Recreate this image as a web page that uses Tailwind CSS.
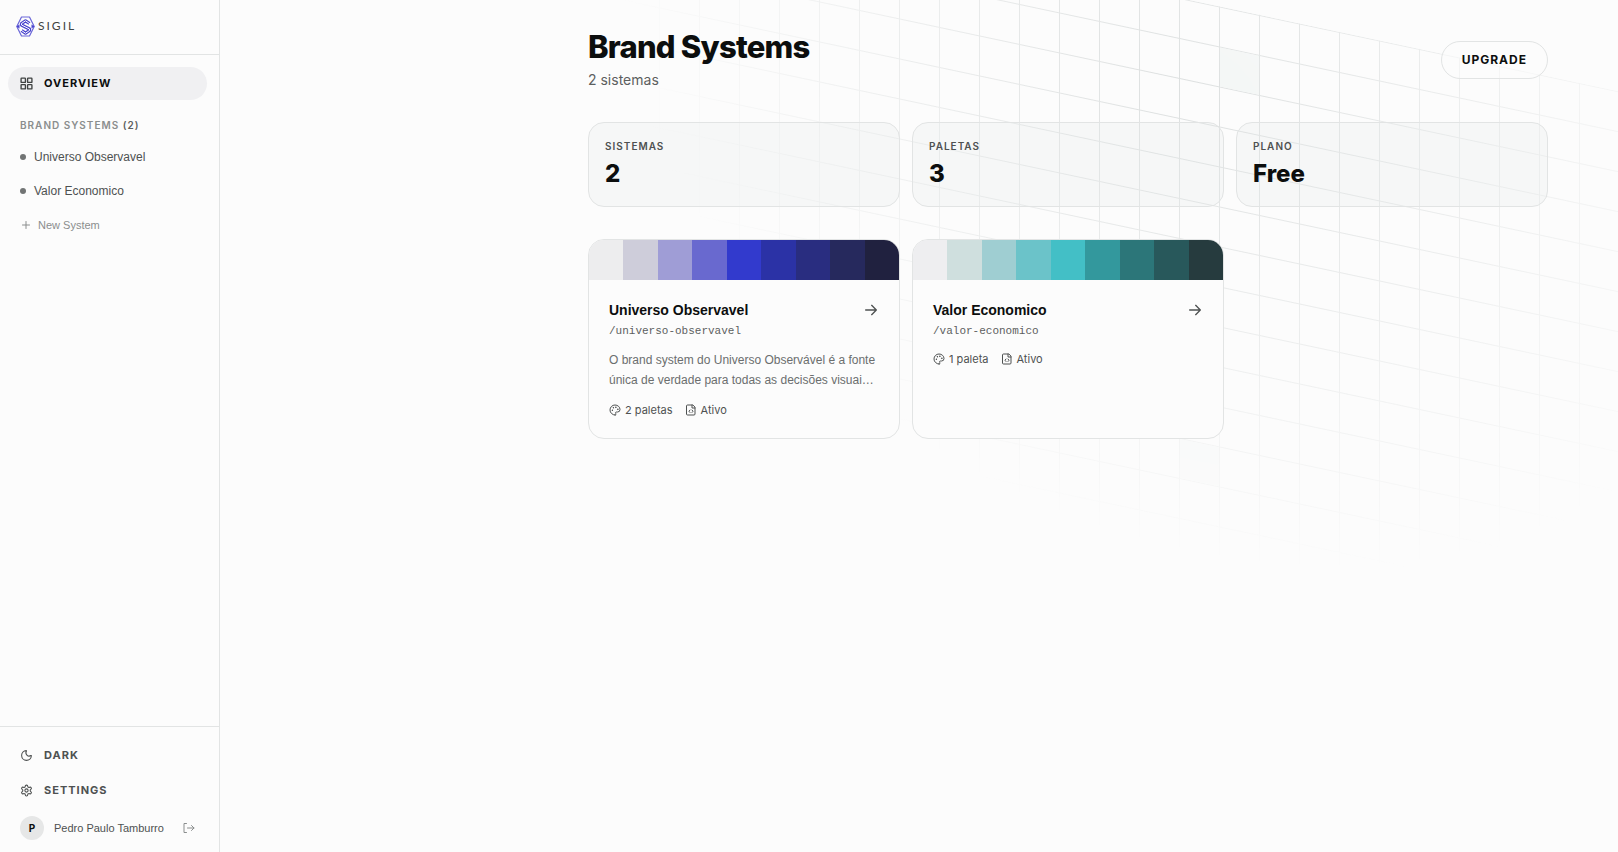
<!DOCTYPE html>
<html lang="pt-BR">
<head>
    <meta charset="UTF-8">
    <meta name="viewport" content="width=device-width, initial-scale=1.0">
    <title>Sigil - Brand Systems</title>
    <script src="https://cdn.jsdelivr.net/npm/@tailwindcss/browser@4"></script>
</head>
<body class="flex min-h-screen bg-[#fcfcfc] text-[#0c0e0e] font-['Inter',sans-serif] antialiased">
    <!-- Sidebar -->
    <aside class="w-[220px] shrink-0 flex flex-col border-r border-[#e2e4e4]">
        <div class="h-[55px] px-4 pb-[2px] flex items-center border-b border-[#e2e4e4]">
            <a href="#" class="flex items-center gap-[3px] text-[#3f4242]" aria-label="Sigil">
                <svg class="w-[19px] h-[21px]" viewBox="0 0 19 21" fill="none" stroke-linejoin="round">
                    <path d="M5.500 1h8L18.200 10.500 13.500 20h-8L.8 10.500z" stroke="#6a66d8" stroke-width="1.200"/>
                    <path d="M13.500 7.500 9.500 4.800 5.500 7.500v1.500l8 4v1.500l-4 2.700-4-2.700" stroke="#4b45cf" stroke-width="3.200"/>
                    <path d="M14.500 8.200 9.500 4.800 5.500 7.500v1.500l8 4v1.500l-4 2.700-5-3.400" stroke="#fcfcfc" stroke-width="1"/>
                    <path d="M.5 10.500 3.500 8.500v4zM18.500 10.500l-3-2v4z" fill="#4b45cf"/>
                </svg>
                <span class="text-xs tracking-[2px] font-['Lato',sans-serif]">SIGIL</span>
            </a>
        </div>

        <nav class="flex-1 pl-2 pr-3 pt-3">
            <a href="#" class="h-[33px] px-3 flex items-center gap-[11px] rounded-full bg-[#f0f0f2] text-[11px] font-bold tracking-[1px]">
                <svg class="size-[13px] text-[#3f4242]" viewBox="0 0 24 24" fill="none" stroke="currentColor" stroke-width="2.500"><rect x="2" y="2" width="8" height="8" rx="1"/><rect x="14" y="2" width="8" height="8" rx="1"/><rect x="14" y="14" width="8" height="8" rx="1"/><rect x="2" y="14" width="8" height="8" rx="1"/></svg>
                OVERVIEW
            </a>
            <p class="mt-[17px] px-3 text-[10px] leading-4 font-semibold tracking-[1px] text-[#8b8e8e]">BRAND SYSTEMS <span class="text-[#5c5f5f]">(2)</span></p>
            <ul class="mt-[7px] text-xs text-[#4e5151] font-['Liberation_Sans',sans-serif]">
                <li><a href="#" class="h-[34px] px-3 flex items-center gap-2"><span class="size-[6px] rounded-full bg-[#717474]"></span>Universo Observavel</a></li>
                <li><a href="#" class="h-[34px] px-3 flex items-center gap-2"><span class="size-[6px] rounded-full bg-[#717474]"></span>Valor Economico</a></li>
            </ul>
            <button type="button" class="h-[34px] px-3 flex items-center gap-[6px] text-[11px] text-[#8b8e8e] font-['Liberation_Sans',sans-serif]">
                <svg class="size-3" viewBox="0 0 24 24" fill="none" stroke="currentColor" stroke-width="2" stroke-linecap="round"><path d="M5 12h14M12 5v14"/></svg>
                New System
            </button>
        </nav>

        <div class="pl-2 pr-3 pt-3 pb-1 border-t border-[#e2e4e4] text-[#4e5151]">
            <button type="button" class="w-full h-[33px] px-3 flex items-center gap-[11px] text-[11px] font-bold tracking-[1px]">
                <svg class="size-[13px]" viewBox="0 0 24 24" fill="none" stroke="currentColor" stroke-width="2" stroke-linecap="round" stroke-linejoin="round"><path d="M20.985 12.486a9 9 0 1 1-9.473-9.472c.405-.022.617.46.402.803a6 6 0 0 0 8.268 8.268c.344-.215.825-.004.803.401"/></svg>
                DARK
            </button>
            <a href="#" class="mt-[2px] h-[33px] px-3 flex items-center gap-[11px] text-[11px] font-bold tracking-[1px]">
                <svg class="size-[13px]" viewBox="0 0 24 24" fill="none" stroke="currentColor" stroke-width="2" stroke-linecap="round" stroke-linejoin="round"><path d="M12.220 2h-.44a2 2 0 0 0-2 2v.18a2 2 0 0 1-1 1.730l-.43.25a2 2 0 0 1-2 0l-.15-.08a2 2 0 0 0-2.730.730l-.22.38a2 2 0 0 0 .73 2.730l.15.1a2 2 0 0 1 1 1.720v.51a2 2 0 0 1-1 1.740l-.15.09a2 2 0 0 0-.73 2.730l.22.38a2 2 0 0 0 2.730.730l.15-.08a2 2 0 0 1 2 0l.43.25a2 2 0 0 1 1 1.730V20a2 2 0 0 0 2 2h.44a2 2 0 0 0 2-2v-.18a2 2 0 0 1 1-1.730l.43-.25a2 2 0 0 1 2 0l.15.08a2 2 0 0 0 2.730-.730l.22-.39a2 2 0 0 0-.73-2.730l-.15-.08a2 2 0 0 1-1-1.740v-.5a2 2 0 0 1 1-1.740l.15-.09a2 2 0 0 0 .73-2.730l-.22-.38a2 2 0 0 0-2.730-.730l-.15.08a2 2 0 0 1-2 0l-.43-.25a2 2 0 0 1-1-1.730V4a2 2 0 0 0-2-2z"/><circle cx="12" cy="12" r="3"/></svg>
                SETTINGS
            </a>
            <div class="mt-px h-10 px-3 flex items-center text-[11px]">
                <span class="size-6 rounded-full bg-[#e6e7e7] flex items-center justify-center text-[10px] font-bold text-[#0c0e0e]">P</span>
                <span class="ml-[10px] flex-1 whitespace-nowrap font-['Liberation_Sans',sans-serif]">Pedro Paulo Tamburro</span>
                <button type="button" aria-label="Sair" class="text-[#8b8e8e]">
                    <svg class="size-3" viewBox="0 0 24 24" fill="none" stroke="currentColor" stroke-width="2" stroke-linecap="round" stroke-linejoin="round"><path d="M7 3H2v18h5M9 12h13M17 7l5 5-5 5"/></svg>
                </button>
            </div>
        </div>
    </aside>

    <!-- Main -->
    <main class="relative flex-1 overflow-hidden">
        <!-- Decorative skewed grid -->
        <svg class="absolute inset-0 w-full h-full pointer-events-none" aria-hidden="true">
            <defs>
                <pattern id="grid" width="40" height="40" patternUnits="userSpaceOnUse" x="999" y="-166">
                    <path d="M.5 40V.5H40" fill="none" stroke="#dcdfdf"/>
                </pattern>
                <radialGradient id="fade" gradientUnits="userSpaceOnUse" cx="0" cy="0" r="1" gradientTransform="translate(970 -110) scale(570 460)">
                    <stop offset="0" stop-color="#fff"/>
                    <stop offset="1" stop-color="#fff" stop-opacity="0"/>
                </radialGradient>
                <mask id="grid-mask" maskUnits="userSpaceOnUse" x="0" y="-400" width="1600" height="1400">
                    <rect x="0" y="-400" width="1600" height="1400" fill="url(#fade)"/>
                </mask>
            </defs>
            <g transform="skewY(12)">
                <g mask="url(#grid-mask)">
                    <rect x="0" y="-206" width="1600" height="1000" fill="url(#grid)"/>
                    <rect x="1000" y="-165" width="39" height="39" fill="#f3f6f5"/>
                    <rect x="960" y="235" width="39" height="39" fill="#f3f6f5"/>
                </g>
            </g>
        </svg>

        <div class="relative ml-auto mr-[70px] max-w-[960px] pt-7">
            <header class="flex items-center justify-between">
                <div>
                    <h1 class="text-[31px] leading-[38px] font-extrabold tracking-tight">Brand Systems</h1>
                    <p class="mt-1 text-sm leading-5 text-[#5c5f5f]">2 sistemas</p>
                </div>
                <button type="button" class="mt-px h-[38px] px-5 rounded-full border border-[#e2e4e4] bg-[#fcfcfc]/50 text-xs font-bold tracking-[1px]">UPGRADE</button>
            </header>

            <section class="mt-8 grid grid-cols-3 gap-3">
                <div class="rounded-2xl border border-[#e2e4e4] bg-[#dfe7e5]/20 px-4 pt-[15px] pb-4">
                    <p class="text-[10px] leading-4 font-semibold tracking-[1px] text-[#4e5151]">SISTEMAS</p>
                    <p class="mt-1 text-2xl leading-8 font-extrabold">2</p>
                </div>
                <div class="rounded-2xl border border-[#e2e4e4] bg-[#dfe7e5]/20 px-4 pt-[15px] pb-4">
                    <p class="text-[10px] leading-4 font-semibold tracking-[1px] text-[#4e5151]">PALETAS</p>
                    <p class="mt-1 text-2xl leading-8 font-extrabold">3</p>
                </div>
                <div class="rounded-2xl border border-[#e2e4e4] bg-[#dfe7e5]/20 px-4 pt-[15px] pb-4">
                    <p class="text-[10px] leading-4 font-semibold tracking-[1px] text-[#4e5151]">PLANO</p>
                    <p class="mt-1 text-2xl leading-8 font-extrabold">Free</p>
                </div>
            </section>

            <section class="mt-8 grid grid-cols-3 gap-3">
                <a href="#" class="overflow-hidden rounded-2xl border border-[#e2e4e4] bg-[#fcfcfc]">
                    <div class="h-10 grid grid-cols-9">
                        <span class="bg-[#ededee]"></span><span class="bg-[#cecdda]"></span><span class="bg-[#9f9dd6]"></span>
                        <span class="bg-[#6969cf]"></span><span class="bg-[#323acd]"></span><span class="bg-[#2b32a6]"></span>
                        <span class="bg-[#292d80]"></span><span class="bg-[#26295d]"></span><span class="bg-[#20213f]"></span>
                    </div>
                    <div class="p-5">
                        <div class="flex items-center justify-between">
                            <h2 class="text-sm leading-5 font-bold font-['Liberation_Sans',sans-serif]">Universo Observavel</h2>
                            <svg class="size-4 text-[#4e5151]" viewBox="0 0 24 24" fill="none" stroke="currentColor" stroke-width="2" stroke-linecap="round" stroke-linejoin="round"><path d="M4 12h16M13 5l7 7-7 7"/></svg>
                        </div>
                        <p class="mt-[3px] text-[11px] leading-4 text-[#5c5f5f] font-['Liberation_Mono',monospace]">/universo-observavel</p>
                        <p class="mt-[11px] text-xs leading-5 text-[#6b6e6e] font-['Liberation_Sans',sans-serif]">O brand system do Universo Observável é a fonte única de verdade para todas as decisões visuai…</p>
                        <div class="mt-3 flex items-center gap-3 text-[11px] leading-4 text-[#4e5151]">
                            <span class="flex items-center gap-1">
                                <svg class="size-3" viewBox="0 0 24 24" fill="none" stroke="currentColor" stroke-width="2" stroke-linecap="round" stroke-linejoin="round"><path d="M12 22a1 1 0 0 1 0-20 10 9 0 0 1 10 9 5 5 0 0 1-5 5h-2.250a1.750 1.750 0 0 0-1.400 2.800l.3.4a1.750 1.750 0 0 1-1.400 2.800z"/><circle cx="13.500" cy="6.500" r=".5"/><circle cx="17.500" cy="10.500" r=".5"/><circle cx="6.500" cy="12.500" r=".5"/><circle cx="8.500" cy="7.500" r=".5"/></svg>
                                2 paletas
                            </span>
                            <span class="flex items-center gap-1">
                                <svg class="size-3" viewBox="0 0 24 24" fill="none" stroke="currentColor" stroke-width="2" stroke-linecap="round" stroke-linejoin="round"><path d="M15 2H5a2 2 0 0 0-2 2v16a2 2 0 0 0 2 2h13a2 2 0 0 0 2-2V7zM14 2v6h6M10 12l-2 2.500 2 2.500M14 12l2 2.500-2 2.500"/></svg>
                                Ativo
                            </span>
                        </div>
                    </div>
                </a>
                <a href="#" class="overflow-hidden rounded-2xl border border-[#e2e4e4] bg-[#fcfcfc]">
                    <div class="h-10 grid grid-cols-9">
                        <span class="bg-[#eeeef0]"></span><span class="bg-[#cfdfde]"></span><span class="bg-[#9fced2]"></span>
                        <span class="bg-[#6bc3c9]"></span><span class="bg-[#43bfc6]"></span><span class="bg-[#33989d]"></span>
                        <span class="bg-[#2c7679]"></span><span class="bg-[#28585b]"></span><span class="bg-[#263b3e]"></span>
                    </div>
                    <div class="p-5">
                        <div class="flex items-center justify-between">
                            <h2 class="text-sm leading-5 font-bold font-['Liberation_Sans',sans-serif]">Valor Economico</h2>
                            <svg class="size-4 text-[#4e5151]" viewBox="0 0 24 24" fill="none" stroke="currentColor" stroke-width="2" stroke-linecap="round" stroke-linejoin="round"><path d="M4 12h16M13 5l7 7-7 7"/></svg>
                        </div>
                        <p class="mt-[3px] text-[11px] leading-4 text-[#5c5f5f] font-['Liberation_Mono',monospace]">/valor-economico</p>
                        <div class="mt-3 flex items-center gap-3 text-[11px] leading-4 text-[#4e5151]">
                            <span class="flex items-center gap-1">
                                <svg class="size-3" viewBox="0 0 24 24" fill="none" stroke="currentColor" stroke-width="2" stroke-linecap="round" stroke-linejoin="round"><path d="M12 22a1 1 0 0 1 0-20 10 9 0 0 1 10 9 5 5 0 0 1-5 5h-2.250a1.750 1.750 0 0 0-1.400 2.800l.3.4a1.750 1.750 0 0 1-1.400 2.800z"/><circle cx="13.500" cy="6.500" r=".5"/><circle cx="17.500" cy="10.500" r=".5"/><circle cx="6.500" cy="12.500" r=".5"/><circle cx="8.500" cy="7.500" r=".5"/></svg>
                                1 paleta
                            </span>
                            <span class="flex items-center gap-1">
                                <svg class="size-3" viewBox="0 0 24 24" fill="none" stroke="currentColor" stroke-width="2" stroke-linecap="round" stroke-linejoin="round"><path d="M15 2H5a2 2 0 0 0-2 2v16a2 2 0 0 0 2 2h13a2 2 0 0 0 2-2V7zM14 2v6h6M10 12l-2 2.500 2 2.500M14 12l2 2.500-2 2.500"/></svg>
                                Ativo
                            </span>
                        </div>
                    </div>
                </a>
            </section>
        </div>
    </main>
</body>
</html>
